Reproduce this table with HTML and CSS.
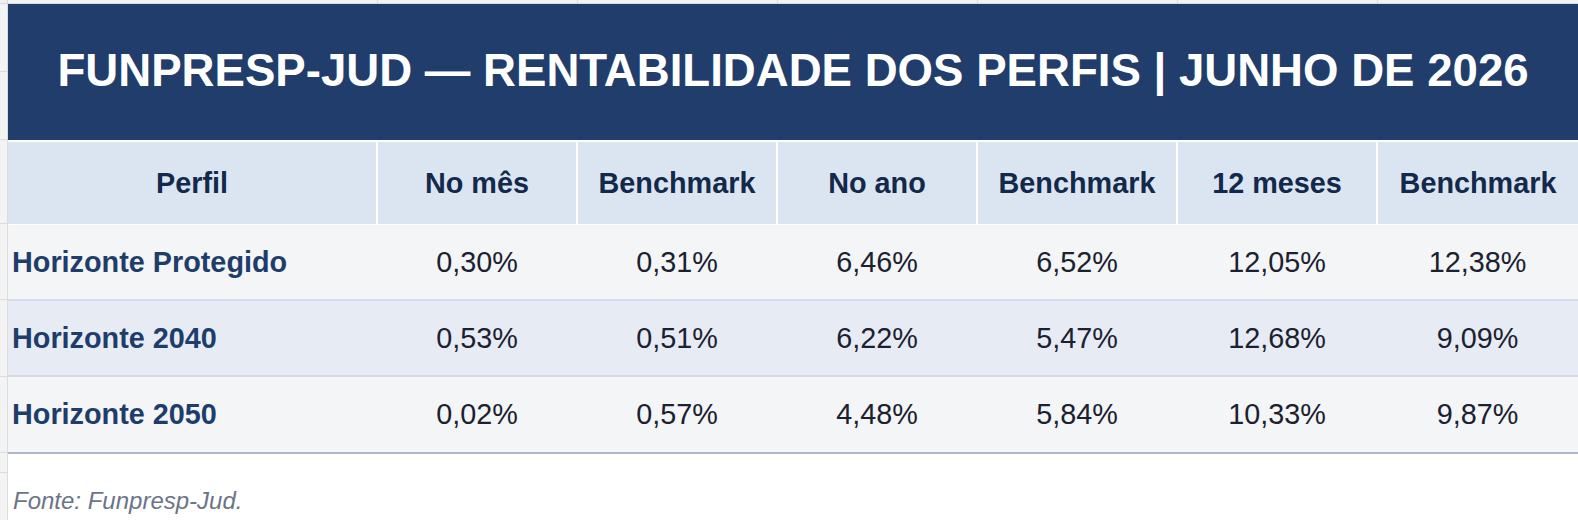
FILE: index.html
```html
<!DOCTYPE html>
<html lang="pt-BR">
<head>
<meta charset="utf-8">
<title>Funpresp-Jud — Rentabilidade dos Perfis</title>
<link rel="stylesheet" href="styles.css">
</head>
<body>
<div class="sheet">
  <div class="corner"></div>
  <div class="ruler-top">
    <div class="rt-cell rt-first"></div>
    <div class="rt-cell"></div>
    <div class="rt-cell"></div>
    <div class="rt-cell"></div>
    <div class="rt-cell"></div>
    <div class="rt-cell"></div>
    <div class="rt-cell rt-last"></div>
  </div>
  <div class="ruler-left">
    <div class="rl-cell rl-a"></div>
    <div class="rl-cell rl-b"></div>
    <div class="rl-cell rl-c"></div>
    <div class="rl-cell rl-d"></div>
    <div class="rl-cell rl-e"></div>
    <div class="rl-cell rl-d"></div>
    <div class="rl-cell rl-f"></div>
    <div class="rl-cell rl-g"></div>
  </div>
  <div class="content">
    <table class="perf">
      <colgroup>
        <col class="c-first">
        <col class="c-val"><col class="c-val"><col class="c-val">
        <col class="c-val"><col class="c-val"><col class="c-last">
      </colgroup>
      <thead>
        <tr class="title-row">
          <th colspan="7" class="title">FUNPRESP-JUD — RENTABILIDADE DOS PERFIS | JUNHO DE 2026</th>
        </tr>
        <tr class="head-row">
          <th>Perfil</th>
          <th>No mês</th>
          <th>Benchmark</th>
          <th>No ano</th>
          <th>Benchmark</th>
          <th>12 meses</th>
          <th>Benchmark</th>
        </tr>
      </thead>
      <tbody>
        <tr class="row-odd">
          <td class="label">Horizonte Protegido</td>
          <td>0,30%</td><td>0,31%</td><td>6,46%</td><td>6,52%</td><td>12,05%</td><td>12,38%</td>
        </tr>
        <tr class="row-even">
          <td class="label">Horizonte 2040</td>
          <td>0,53%</td><td>0,51%</td><td>6,22%</td><td>5,47%</td><td>12,68%</td><td>9,09%</td>
        </tr>
        <tr class="row-odd row-last">
          <td class="label">Horizonte 2050</td>
          <td>0,02%</td><td>0,57%</td><td>4,48%</td><td>5,84%</td><td>10,33%</td><td>9,87%</td>
        </tr>
      </tbody>
    </table>
    <p class="source">Fonte: Funpresp-Jud.</p>
  </div>
</div>
</body>
</html>
```

FILE: styles.css
```css
html, body {
  margin: 0;
  padding: 0;
  background: #ffffff;
}

body {
  font-family: "Liberation Sans", Arial, sans-serif;
  overflow: hidden;
}

.sheet {
  display: grid;
  grid-template-columns: 8px 1570px;
  grid-template-rows: 4px auto;
  width: 1578px;
  height: 520px;
  overflow: hidden;
}

.corner {
  background: #efefef;
  border-right: 1px solid #d9d9d9;
  border-bottom: 1px solid #d9d9d9;
  box-sizing: border-box;
}

.ruler-top {
  display: flex;
  background: #f3f3f3;
  border-bottom: 1px solid #dcdcdc;
  box-sizing: border-box;
  overflow: hidden;
}

.rt-cell {
  width: 200px;
  flex: none;
  border-right: 1px solid #dcdcdc;
  box-sizing: border-box;
}

.rt-first { width: 370px; }
.rt-last { width: 200px; border-right: none; }

.ruler-left {
  display: flex;
  flex-direction: column;
  background: #f3f3f3;
  border-right: 1px solid #dcdcdc;
  box-sizing: border-box;
}

.rl-cell {
  flex: none;
  border-bottom: 1px solid #dcdcdc;
  box-sizing: border-box;
}

.rl-a { height: 68px; }
.rl-b { height: 68px; }
.rl-c { height: 84px; }
.rl-d { height: 76px; }
.rl-e { height: 77px; }
.rl-f { height: 20px; }
.rl-g { flex: 1; border-bottom: none; }

.content {
  min-width: 0;
}

.perf {
  width: 1570px;
  border-collapse: collapse;
  table-layout: fixed;
}

.c-first { width: 369px; }
.c-val { width: 200px; }
.c-last { width: 201px; }

.title {
  background: #203d6b;
  color: #ffffff;
  font-size: 45.6px;
  font-weight: bold;
  height: 134px;
  padding: 0 0 2px 0;
  text-align: center;
  vertical-align: middle;
  border-bottom: 2px solid #ffffff;
}

.head-row th {
  background: #dbe5f1;
  color: #13294b;
  font-size: 28.8px;
  font-weight: bold;
  height: 82px;
  padding: 0;
  text-align: center;
  vertical-align: middle;
  border-left: 2px solid #ffffff;
  border-right: 2px solid #ffffff;
  border-bottom: 1px solid #ffffff;
}

.head-row th:first-child { border-left: none; }
.head-row th:last-child { border-right: none; }

tbody td {
  font-size: 28.8px;
  color: #1b2130;
  text-align: center;
  vertical-align: middle;
  height: 74px;
  padding: 0;
  border-bottom: 2px solid #d4dbe6;
}

.row-odd td { background: #f4f5f7; }
.row-even td { background: #e7ecf4; }

.row-last td {
  border-bottom: 2px solid #adb7c6;
  height: 75px;
}

tbody td.label {
  text-align: left;
  padding-left: 4px;
  font-weight: bold;
  color: #1f3d6b;
}

.source {
  margin: 33px 0 0 0;
  padding-left: 5px;
  font-size: 24px;
  font-style: italic;
  color: #6b7488;
}
```
